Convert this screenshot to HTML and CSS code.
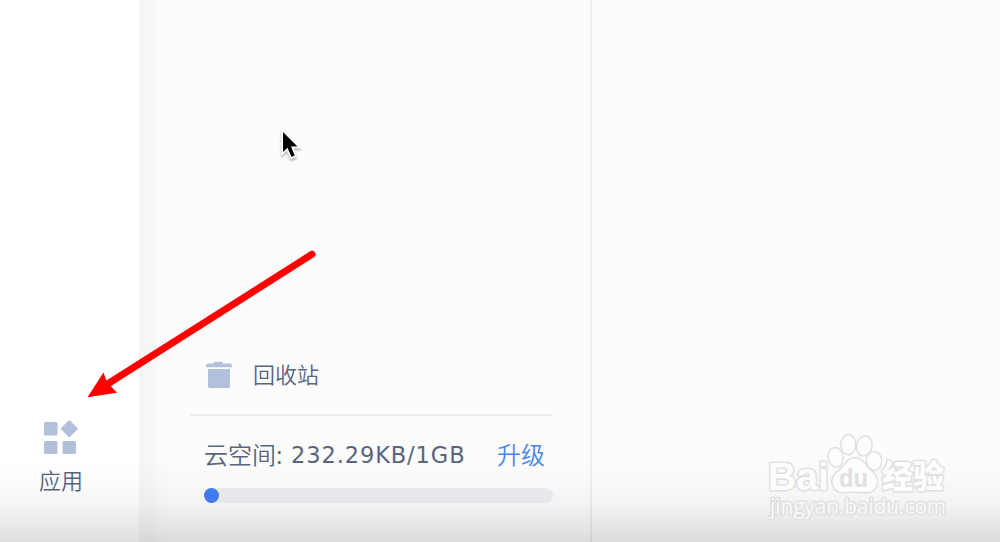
FILE: index.html
```
<!DOCTYPE html>
<html lang="zh-CN">
<head>
    <meta charset="UTF-8">
    <meta name="viewport" content="width=device-width, initial-scale=1.0">
    <title>云空间</title>
    <link rel="stylesheet" href="styles.css">
</head>
<body>

    <div class="container">
        <!-- App rail -->
        <nav class="rail">
            <a class="rail-item">
                <svg class="apps-icon" width="36" height="36" viewBox="0 0 36 36">
                    <rect x="1" y="3" width="13.5" height="13.5" rx="1.5"/>
                    <rect x="1" y="22" width="13.5" height="13" rx="1.5"/>
                    <rect x="19.5" y="22" width="13.5" height="13" rx="1.5"/>
                    <rect x="20" y="3.4" width="12.6" height="12.6" rx="1.3" transform="rotate(45 26.3 9.7)"/>
                </svg>
                <span class="rail-label">应用</span>
            </a>
        </nav>

        <!-- Folder panel -->
        <aside class="panel">
            <div class="recycle">
                <svg class="trash-icon" width="28" height="28" viewBox="0 0 28 28">
                    <path d="M9 2.5V1.900Q9 0.8 10.1 0.8H17Q18 0.8 18 1.900V2.500H24.5Q27 2.500 27 5V6.300H1V5Q1 2.500 3.5 2.500Z"/>
                    <path d="M3 8H25V25.200Q25 27 23.2 27H4.800Q3 27 3 25.200Z"/>
                </svg>
                <span class="recycle-label">回收站</span>
            </div>
            <div class="storage">
                <div class="storage-row">
                    <span class="storage-name">云空间:</span>
                    <span class="storage-size">232.29KB/1GB</span>
                    <a class="upgrade">升级</a>
                </div>
                <div class="bar"><div class="bar-used"></div></div>
            </div>
        </aside>

        <main class="content"></main>
    </div>

    <div class="fade"></div>

    <svg class="arrow" width="240" height="160" viewBox="80 245 240 160">
        <path class="arrow-line" d="M312 254.300L104 386.300"/>
        <path class="arrow-head" d="M87.500 397.300L103.500 372.500L107 382L117 392.700Z"/>
    </svg>

    <svg class="cursor" width="28" height="38" viewBox="0 0 28 38">
        <path d="M5 3V23L9.500 18.800L13.500 28L16.800 26.600L13 17.500H19.500Z"/>
    </svg>

    <svg class="watermark" width="200" height="100" viewBox="760 430 200 100">
        <text class="wm-latin" x="768" y="490" textLength="61" lengthAdjust="spacingAndGlyphs">Bai</text>
        <g class="paw">
            <ellipse cx="835.500" cy="457.300" rx="6.700" ry="9" transform="rotate(-8 835.500 457.300)"/>
            <ellipse cx="848.300" cy="444.600" rx="6.700" ry="9.300"/>
            <ellipse cx="864.200" cy="446" rx="7" ry="9.200" transform="rotate(12 864.200 446)"/>
            <ellipse cx="874" cy="461" rx="7" ry="8.800"/>
            <path d="M855 458.500C863 458.500 865 466 871 471C877 477 879 482 875 488C871 494 863 491.500 855 491.500C847 491.500 839 494 835 488C830 481 834 475 839 471C845 466 847 458.500 855 458.500Z"/>
        </g>
        <text class="wm-du" x="839" y="486.500" textLength="29" lengthAdjust="spacingAndGlyphs">du</text>
        <text class="wm-cjk" x="882" y="488" textLength="62" lengthAdjust="spacingAndGlyphs">经验</text>
        <text class="wm-url" x="770" y="514" textLength="176" lengthAdjust="spacingAndGlyphs">jingyan.baidu.com</text>
    </svg>

</body>
</html>
```
FILE: styles.css
```
body {
    margin: 0;
    position: relative;
    width: 1000px;
    height: 542px;
    overflow: hidden;
    background-color: #fcfcfc;
    color: #59657e;
    font-family: "Noto Sans", "Noto Sans CJK SC", sans-serif;
}
.container {
    display: flex;
    height: 542px;
}
.rail {
    box-sizing: border-box;
    width: 139px;
    padding: 0 17px 47px 0;
    background-color: white;
    display: flex;
    flex-direction: column;
    justify-content: flex-end;
}
.rail-item {
    display: flex;
    flex-direction: column;
    align-items: center;
    gap: 8px;
}
.apps-icon, .trash-icon {
    fill: #b3c0db;
}
.rail-label, .recycle-label, .storage-name, .upgrade {
    font-family: "Noto Sans CJK SC", sans-serif;
    font-weight: 350;
    line-height: 32px;
    white-space: nowrap;
}
.rail-label {
    font-size: 22px;
}
.panel {
    box-sizing: border-box;
    width: 453px;
    padding: 0 37px 39px 51px;
    border-right: 2px solid #eeeef3;
    background: linear-gradient(90deg, #f5f5f5, #f7f7f7 16px, #fafafa 17px, #fafafa 26px, #fcfcfc 28px);
    display: flex;
    flex-direction: column;
    justify-content: flex-end;
}
.recycle {
    display: flex;
    align-items: center;
    gap: 20px;
    padding: 0 0 23px 15px;
}
.recycle-label {
    font-size: 22px;
    line-height: 28px;
    padding-bottom: 4px;
}
.storage {
    border-top: 2px solid #eeeef3;
    padding: 22px 0 0 14px;
}
.storage-row {
    display: flex;
    align-items: center;
    height: 32px;
    margin-bottom: 18px;
}
.storage-name {
    font-size: 24px;
    width: 87px;
}
.storage-size {
    font-family: "DejaVu Sans", sans-serif;
    font-size: 22.5px;
    letter-spacing: 0.9px;
    line-height: 30px;
    padding-top: 2px;
    width: 206px;
}
.upgrade {
    font-size: 24px;
    color: #4a86ea;
}
.bar {
    height: 15px;
    border-radius: 8px;
    background-color: #edeef2;
}
.bar-used {
    width: 15px;
    height: 15px;
    border-radius: 8px;
    background-color: #417ff5;
}
/* Bottom shade */
.fade {
    position: absolute;
    left: 0;
    bottom: 0;
    width: 100%;
    height: 82px;
    background: linear-gradient(rgba(0, 0, 0, 0), rgba(0, 0, 0, 0.02) 37%, rgba(0, 0, 0, 0.04) 55%, rgba(0, 0, 0, 0.08) 75%, rgba(0, 0, 0, 0.13));
}
.arrow {
    position: absolute;
    left: 80px;
    top: 245px;
}
.arrow-line {
    stroke: red;
    stroke-width: 7;
    stroke-linecap: round;
}
.arrow-head {
    fill: red;
}
.cursor {
    position: absolute;
    left: 278px;
    top: 129px;
    fill: black;
    stroke: white;
    stroke-width: 3.5;
    paint-order: stroke;
    filter: drop-shadow(0 2px 1px rgba(0, 0, 0, 0.3));
}
/* Watermark */
.watermark {
    position: absolute;
    left: 760px;
    top: 430px;
    fill: #fdfdfd;
    stroke: #e0e0e0;
    stroke-width: 3;
    paint-order: stroke;
    stroke-linejoin: round;
}
.wm-latin {
    font: bold 39px "Liberation Sans", sans-serif;
}
.wm-du {
    font: bold 25px "Liberation Sans", sans-serif;
    fill: #e0e0e0;
    stroke: none;
}
.wm-cjk {
    font: 900 32px "Noto Sans CJK SC", sans-serif;
}
.wm-url {
    font: 21px "Open Sans", sans-serif;
    fill: #f8f8f8;
}
```
